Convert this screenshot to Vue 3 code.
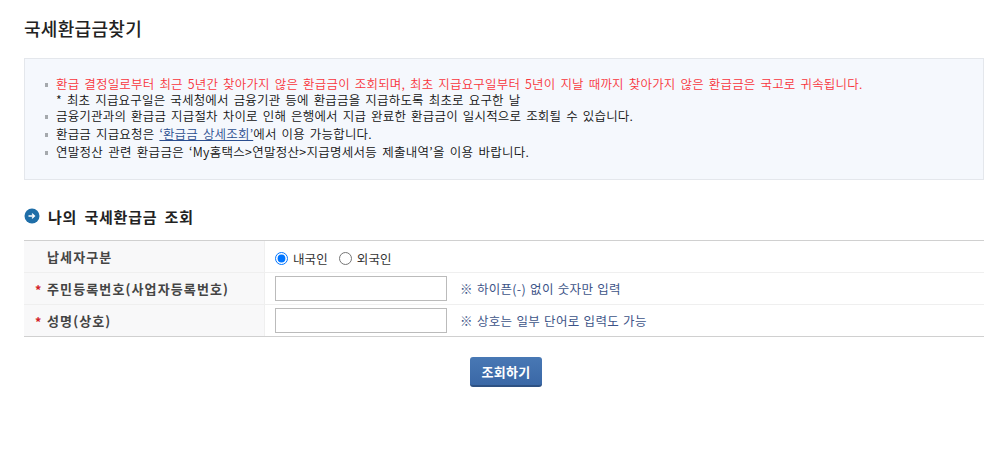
<script setup>
const rows = [
  { label: '주민등록번호(사업자등록번호)', hint: '※ 하이픈(-) 없이 숫자만 입력' },
  { label: '성명(상호)', hint: '※ 상호는 일부 단어로 입력도 가능' }
]
</script>

<template>
  <div class="page">
    <h1 class="title">국세환급금찾기</h1>
    <div class="notice">
      <ul class="list">
        <li class="red">환급 결정일로부터 최근 5년간 찾아가지 않은 환급금이 조회되며, 최초 지급요구일부터 5년이 지날 때까지 찾아가지 않은 환급금은 국고로 귀속됩니다.</li>
        <li class="sub">* 최초 지급요구일은 국세청에서 금융기관 등에 환급금을 지급하도록 최초로 요구한 날</li>
        <li>금융기관과의 환급금 지급절차 차이로 인해 은행에서 지급 완료한 환급금이 일시적으로 조회될 수 있습니다.</li>
        <li class="gap">환급금 지급요청은 <a class="link">‘환급금 상세조회’</a>에서 이용 가능합니다.</li>
        <li class="gap wide">연말정산 관련 환급금은 ‘My홈택스&gt;연말정산&gt;지급명세서등 제출내역’을 이용 바랍니다.</li>
      </ul>
    </div>

    <h2 class="section">
      <svg class="arrow" width="16" height="16" viewBox="0 0 16 16">
        <circle cx="8" cy="8" r="7.5" fill="#1f6ea8" />
        <path d="M4.5 8h6M8 5.6 10.5 8 8 10.4" fill="none" stroke="#fff" stroke-width="1.3" />
      </svg>
      <span>나의 국세환급금 조회</span>
    </h2>

    <div class="table">
      <div class="row first">
        <div class="head"><span class="label">납세자구분</span></div>
        <div class="cell radios">
          <label class="radio"><input type="radio" name="kind" checked />내국인</label>
          <label class="radio"><input type="radio" name="kind" />외국인</label>
        </div>
      </div>
      <div v-for="r in rows" :key="r.label" class="row">
        <div class="head"><span class="star">*</span><span class="label">{{ r.label }}</span></div>
        <div class="cell">
          <input class="field" type="text" />
          <span class="hint">{{ r.hint }}</span>
        </div>
      </div>
    </div>

    <div class="actions">
      <button class="btn" type="button">조회하기</button>
    </div>
  </div>
</template>

<style>
html, body { margin: 0; background: #fff; }
</style>

<style scoped>
.page {
  box-sizing: border-box;
  width: 994px;
  height: 458px;
  padding: 0 10px 0 24px;
  overflow: hidden;
  font-family: "Noto Sans CJK KR", "Noto Sans", sans-serif;
  font-size: 12.5px;
  color: #111;
}
.title {
  margin: 0;
  padding-top: 17px;
  height: 58px;
  box-sizing: border-box;
  font-size: 18px;
  line-height: 22px;
  font-weight: 500;
  letter-spacing: 0.3px;
  color: #222;
}
.notice {
  box-sizing: border-box;
  height: 122px;
  background: #f5f8fd;
  border: 1px solid #e4e7ec;
  padding: 17px 20px 0;
}
.list { margin: 0; padding: 0; list-style: none; }
.list li {
  position: relative;
  padding-left: 11px;
  line-height: 16px;
  white-space: nowrap;
  word-spacing: 2px;
  letter-spacing: 0.18px;
  font-weight: 350;
}
.list li::before {
  content: "";
  position: absolute;
  left: 0;
  top: 7px;
  width: 3px;
  height: 4px;
  background: #a5a9ad;
}
.list li.sub::before { display: none; }
.list li.gap { margin-top: 2px; }
.list li.wide { letter-spacing: 0.28px; }
.red { color: #f8353c; }
.link { color: #2a4d8f; text-decoration: underline; }
.section {
  display: flex;
  align-items: center;
  gap: 8px;
  margin: 26px 0 0;
  height: 20px;
  font-size: 15px;
  font-weight: 700;
  color: #222;
  word-spacing: 3px;
  letter-spacing: 0.8px;
}
.arrow { flex: none; }
.table {
  margin-top: 14px;
  border-top: 1px solid #d0d0d0;
  border-bottom: 1px solid #d0d0d0;
}
.row {
  display: flex;
  height: 32px;
  box-sizing: border-box;
}
.row.first { height: 31px; }
.row + .row { border-top: 1px solid #efefef; }
.head {
  box-sizing: border-box;
  position: relative;
  width: 241px;
  flex: none;
  padding-left: 23px;
  display: flex;
  align-items: center;
  background: #f8f8f9;
  border-right: 1px solid #efefef;
}
.label {
  font-size: 13px;
  font-weight: 700;
  color: #444;
  letter-spacing: 1.12px;
}
.star {
  position: absolute;
  left: 11px;
  top: 9px;
  color: #d3222a;
  font-weight: 700;
  line-height: 16px;
}
.cell {
  display: flex;
  align-items: center;
  padding-left: 10px;
  flex: 1;
  color: #333;
}
.radios { padding-top: 3px; }
.radio {
  display: flex;
  align-items: center;
  margin-right: 11px;
  letter-spacing: 0.1px;
}
.radio input {
  width: 13px;
  height: 13px;
  margin: 0 5px 0 0;
}
.field {
  box-sizing: border-box;
  width: 172px;
  height: 25px;
  margin: 0;
  padding: 0 4px;
  background: #fff;
  border: 1px solid #bbb;
  border-radius: 0;
}
.hint {
  margin-left: 13px;
  color: #3d5488;
  letter-spacing: 0.3px;
  word-spacing: 1px;
}
.actions {
  display: flex;
  justify-content: center;
  margin-top: 20px;
  padding-left: 4px;
}
.btn {
  box-sizing: border-box;
  width: 72px;
  height: 30px;
  padding: 0;
  border: 0;
  border-bottom: 2px solid #2d5183;
  border-radius: 3px;
  background: linear-gradient(#4878b4, #3a68a6);
  color: #fff;
  font-family: inherit;
  font-size: 13px;
  font-weight: 700;
  letter-spacing: 0.3px;
}
</style>
